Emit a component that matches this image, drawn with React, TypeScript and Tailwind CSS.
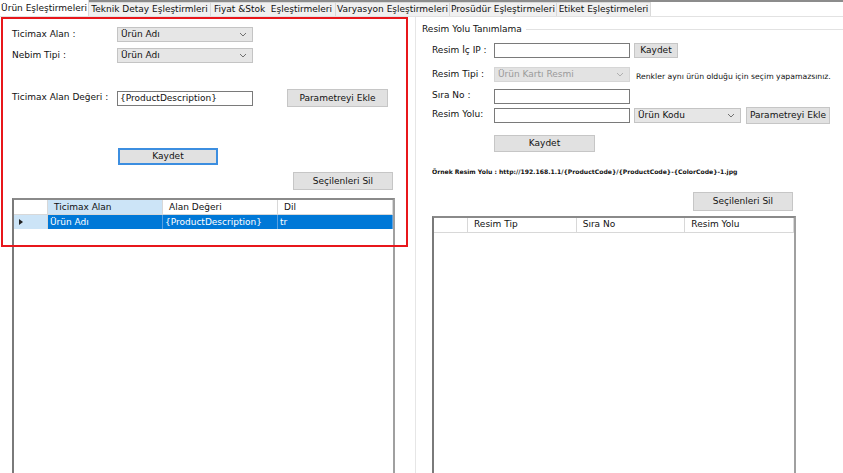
import React from 'react';

const font = { fontFamily: '"DejaVu Sans", Verdana, sans-serif' };

const tabs = [
  { label: 'Ürün Eşleştirmeleri', w: 'w-[89px]', active: true },
  { label: 'Teknik Detay Eşleştirmleri', w: 'w-[122px]' },
  { label: 'Fiyat &Stok  Eşleştirmeleri', w: 'w-[125px]' },
  { label: 'Varyasyon Eşleştirmeleri', w: 'w-[114px]' },
  { label: 'Prosüdür Eşleştirmeleri', w: 'w-[107px]' },
  { label: 'Etiket Eşleştirmeleri', w: 'w-[94px]' },
];

function Caret({ light }: { light?: boolean }) {
  return (
    <svg width="8" height="5" viewBox="0 0 8 5" className="shrink-0">
      <path d="M1 1 L4 4 L7 1" fill="none" stroke={light ? '#b0b0b0' : '#707070'} strokeWidth="1" />
    </svg>
  );
}

function Select({ value, w, disabled }: { value: string; w: string; disabled?: boolean }) {
  return (
    <div
      className={`${w} shrink-0 h-[15px] flex items-center justify-between pl-[3px] pr-[5px] border ${
        disabled ? 'bg-[#e3e3e3] border-[#d6d6d6] text-[#9a9a9a]' : 'bg-[#e6e6e6] border-[#c4c4c4] text-[#111]'
      }`}
    >
      <span className="leading-none">{value}</span>
      <Caret light={disabled} />
    </div>
  );
}

function Input({ value, w }: { value?: string; w: string }) {
  return (
    <div className={`${w} shrink-0 h-[15px] flex items-center pl-[2px] bg-white border border-[#7a7a7a] text-[#111] leading-none`}>
      {value}
    </div>
  );
}

function Button({ label, cls }: { label: string; cls: string }) {
  return (
    <div className={`${cls} shrink-0 flex items-center justify-center bg-[#e1e1e1] border border-[#c6c6c6] text-[#111] leading-none`}>
      {label}
    </div>
  );
}

function Label({ text, w }: { text: string; w: string }) {
  return <span className={`${w} shrink-0 whitespace-nowrap`}>{text}</span>;
}

function Grid({ cols, rows, cls }: { cols: string[]; rows: string[][]; cls: string }) {
  return (
    <div className={`${cls} border-l-2 border-t-2 border-r-2 border-l-[#7a7a7a] border-t-[#8a8a8a] border-r-[#a0a0a0] bg-white`}>
      <div className="flex h-[15px] border-b border-[#d8d8d8]">
        <div className="w-[34px] border-r border-[#d8d8d8]" />
        {cols.map((c, i) => (
          <div
            key={c}
            className={`flex-1 flex items-center pl-[6px] border-r border-[#d8d8d8] leading-none ${
              i === 0 && rows.length ? 'bg-[#cce4f7]' : ''
            }`}
          >
            {c}
          </div>
        ))}
      </div>
      {rows.map((r, ri) => (
        <div key={ri} className="flex h-[14px]">
          <div className="w-[34px] bg-[#cce4f7] flex items-center pl-[5px] border-r border-[#d8d8d8]">
            <svg width="4" height="6" viewBox="0 0 4 6">
              <path d="M0 0 L4 3 L0 6 Z" fill="#222" />
            </svg>
          </div>
          {r.map((c, ci) => (
            <div key={ci} className="flex-1 flex items-center pl-[2px] bg-[#0078d7] text-white border-r border-[#5aa0e0] leading-none">
              {c}
            </div>
          ))}
        </div>
      ))}
    </div>
  );
}

export default function App() {
  return (
    <div className="w-[843px] h-[473px] bg-white overflow-hidden text-[9px] text-[#111] relative" style={font}>
      {/* tab strip */}
      <div className="border-t-2 border-[#8c8c8c] h-[17px] flex items-end border-b border-b-[#e2e2e2] bg-white">
        {tabs.map((t) => (
          <div
            key={t.label}
            className={`${t.w} shrink-0 whitespace-pre flex items-center justify-center leading-none ${
              t.active
                ? 'h-[16px] bg-white border-r border-[#d9d9d9]'
                : 'h-[14px] bg-[#f0f0f0] border-r border-t border-[#d9d9d9]'
            }`}
          >
            {t.label}
          </div>
        ))}
      </div>

      <div className="flex h-[456px]">
        {/* left panel */}
        <div className="w-[416px] shrink-0 border-r border-[#e6e6e6] flex flex-col pl-[12px]">
          <div className="flex items-center mt-[10px]">
            <Label text="Ticimax Alan :" w="w-[105px]" />
            <Select value="Ürün Adı" w="w-[136px]" />
          </div>
          <div className="flex items-center mt-[6px]">
            <Label text="Nebim Tipi :" w="w-[105px]" />
            <Select value="Ürün Adı" w="w-[136px]" />
          </div>
          <div className="flex items-center mt-[26px]">
            <Label text="Ticimax Alan Değeri :" w="w-[105px]" />
            <Input value="{ProductDescription}" w="w-[136px]" />
            <Button label="Parametreyi Ekle" cls="ml-[34px] w-[101px] h-[18px]" />
          </div>
          <div className="mt-[41px] pl-[106px]">
            <Button label="Kaydet" cls="w-[100px] h-[17px] !border-[#3c8ee0] border-2" />
          </div>
          <div className="mt-[7px] pl-[281px]">
            <Button label="Seçilenleri Sil" cls="w-[100px] h-[18px]" />
          </div>
          <Grid
            cls="mt-[8px] w-[383px] flex-1"
            cols={['Ticimax Alan', 'Alan Değeri', 'Dil']}
            rows={[['Ürün Adı', '{ProductDescription}', 'tr']]}
          />
        </div>

        {/* right panel */}
        <div className="flex-1 flex flex-col">
          <div className="mt-[8px] flex items-center">
            <span className="pl-[6px] pr-[4px] leading-none">Resim Yolu Tanımlama</span>
            <div className="flex-1 border-t border-[#e2e2e2]" />
          </div>
          <div className="flex items-center mt-[9px] pl-[16px]">
            <Label text="Resim İç IP :" w="w-[62px]" />
            <Input w="w-[136px]" />
            <Button label="Kaydet" cls="ml-[4px] w-[44px] h-[15px]" />
          </div>
          <div className="flex items-center mt-[9px] pl-[16px]">
            <Label text="Resim Tipi :" w="w-[62px]" />
            <Select value="Ürün Kartı Resmi" w="w-[136px]" disabled />
            <span className="ml-[6px] text-[7.7px] mt-[4px] whitespace-nowrap">
              Renkler aynı ürün olduğu için seçim yapamazsınız.
            </span>
          </div>
          <div className="flex items-center mt-[6px] pl-[16px]">
            <Label text="Sıra No :" w="w-[62px]" />
            <Input w="w-[136px]" />
          </div>
          <div className="flex items-center mt-[3px] pl-[16px]">
            <Label text="Resim Yolu:" w="w-[62px]" />
            <Input w="w-[136px]" />
            <Select value="Ürün Kodu" w="ml-[4px] w-[107px]" />
            <Button label="Parametreyi Ekle" cls="ml-[5px] w-[84px] h-[17px]" />
          </div>
          <div className="mt-[11px] pl-[78px]">
            <Button label="Kaydet" cls="w-[101px] h-[17px]" />
          </div>
          <div className="mt-[17px] pl-[16px] text-[6.1px] font-bold leading-none whitespace-nowrap">
            Örnek Resim Yolu : http://192.168.1.1/{'{ProductCode}'}/{'{ProductCode}'}-{'{ColorCode}'}-1.jpg
          </div>
          <div className="mt-[17px] pl-[277px]">
            <Button label="Seçilenleri Sil" cls="w-[100px] h-[19px]" />
          </div>
          <Grid
            cls="mt-[5px] ml-[16px] w-[364px] flex-1"
            cols={['Resim Tip', 'Sıra No', 'Resim Yolu']}
            rows={[]}
          />
        </div>
      </div>

      {/* annotation overlay */}
      <div className="absolute left-[1px] top-[17px] w-[407px] h-[230px] border-2 border-[#e8161b] pointer-events-none" />
    </div>
  );
}
